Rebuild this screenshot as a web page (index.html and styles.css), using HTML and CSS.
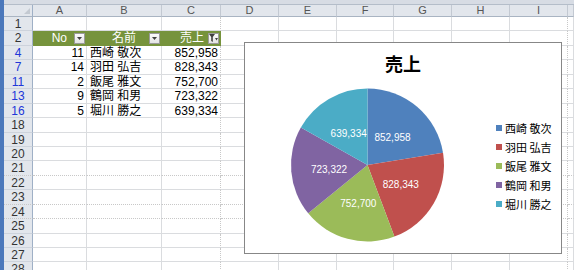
FILE: index.html
```html
<!DOCTYPE html>
<html lang="ja">
    <head>
        <meta charset="UTF-8" />
        <title>売上 - Sheet1</title>
        <link rel="stylesheet" href="styles.css" />
    </head>
    <body>
        <div class="window">
            <div class="frame-top"></div>

            <div class="sheet">
                <div class="row col-head">
                    <div class="corner">
                        <svg width="6" height="6" viewBox="0 0 6 6"><path d="M6 0v6H0z" fill="#c3c9d1" /></svg>
                    </div>
                    <div>A</div>
                    <div>B</div>
                    <div>C</div>
                    <div>D</div>
                    <div>E</div>
                    <div>F</div>
                    <div>G</div>
                    <div>H</div>
                    <div>I</div>
                    <div></div>
                </div>

                <div class="row"><div class="rh">1</div><div></div><div></div><div class="edge"></div><div></div><div></div><div></div><div></div><div></div><div class="edge"></div><div></div></div>

                <div class="row">
                    <div class="rh">2</div>
                    <div class="th">
                        <span>No</span>
                        <span class="dd"><svg width="5" height="3" viewBox="0 0 5 3"><path d="M0 0h5L2.5 3z" fill="#404040" /></svg></span>
                    </div>
                    <div class="th center">
                        <span class="th-label">名前</span>
                        <span class="dd"><svg width="5" height="3" viewBox="0 0 5 3"><path d="M0 0h5L2.5 3z" fill="#404040" /></svg></span>
                    </div>
                    <div class="th tight">
                        <span>売上</span>
                        <span class="dd">
                            <svg width="9" height="8" viewBox="0 0 9 8">
                                <path d="M0 0h6L3.8 3v5L2.2 7V3z" fill="#404040" />
                                <path d="M6 4h3L7.5 6.5z" fill="#404040" />
                            </svg>
                        </span>
                    </div>
                    <div></div><div></div><div></div><div></div><div></div><div class="edge"></div><div></div>
                </div>

                <div class="row"><div class="rh hit">4</div><div class="num">11</div><div class="name">西崎 敬次</div><div class="num edge">852,958</div><div></div><div></div><div></div><div></div><div></div><div class="edge"></div><div></div></div>
                <div class="row"><div class="rh hit">7</div><div class="num">14</div><div class="name">羽田 弘吉</div><div class="num edge">828,343</div><div></div><div></div><div></div><div></div><div></div><div class="edge"></div><div></div></div>
                <div class="row"><div class="rh hit">11</div><div class="num">2</div><div class="name">飯尾 雅文</div><div class="num edge">752,700</div><div></div><div></div><div></div><div></div><div></div><div class="edge"></div><div></div></div>
                <div class="row"><div class="rh hit">13</div><div class="num">9</div><div class="name">鶴岡 和男</div><div class="num edge">723,322</div><div></div><div></div><div></div><div></div><div></div><div class="edge"></div><div></div></div>
                <div class="row"><div class="rh hit">16</div><div class="num">5</div><div class="name">堀川 勝之</div><div class="num edge">639,334</div><div></div><div></div><div></div><div></div><div></div><div class="edge"></div><div></div></div>

                <div class="row"><div class="rh">18</div><div></div><div></div><div class="edge"></div><div></div><div></div><div></div><div></div><div></div><div class="edge"></div><div></div></div>
                <div class="row"><div class="rh">19</div><div></div><div></div><div class="edge"></div><div></div><div></div><div></div><div></div><div></div><div class="edge"></div><div></div></div>
                <div class="row"><div class="rh">20</div><div></div><div></div><div class="edge"></div><div></div><div></div><div></div><div></div><div></div><div class="edge"></div><div></div></div>
                <div class="row page-break"><div class="rh">21</div><div></div><div></div><div class="edge"></div><div></div><div></div><div></div><div></div><div></div><div class="edge"></div><div></div></div>
                <div class="row"><div class="rh">22</div><div></div><div></div><div class="edge"></div><div></div><div></div><div></div><div></div><div></div><div class="edge"></div><div></div></div>
                <div class="row page-break"><div class="rh">23</div><div></div><div></div><div class="edge"></div><div></div><div></div><div></div><div></div><div></div><div class="edge"></div><div></div></div>
                <div class="row page-break"><div class="rh">24</div><div></div><div></div><div class="edge"></div><div></div><div></div><div></div><div></div><div></div><div class="edge"></div><div></div></div>
                <div class="row"><div class="rh">25</div><div></div><div></div><div class="edge"></div><div></div><div></div><div></div><div></div><div></div><div class="edge"></div><div></div></div>
                <div class="row"><div class="rh">26</div><div></div><div></div><div class="edge"></div><div></div><div></div><div></div><div></div><div></div><div class="edge"></div><div></div></div>
                <div class="row"><div class="rh">27</div><div></div><div></div><div class="edge"></div><div></div><div></div><div></div><div></div><div></div><div class="edge"></div><div></div></div>
                <div class="row"><div class="rh">28</div><div></div><div></div><div class="edge"></div><div></div><div></div><div></div><div></div><div></div><div class="edge"></div><div></div></div>
            </div>

            <!-- embedded chart floats over the cells -->
            <div class="chart">
                <div class="chart-title">売上</div>
                <div class="chart-body">
                    <svg class="pie" width="240" height="179" viewBox="0 0 240 179">
                        <path d="M122.5 91L122.5 14.5A76.5 76.5 0 0 1 198.03 78.87Z" fill="#4f81bd" />
                        <path d="M122.5 91L198.03 78.87A76.5 76.5 0 0 1 149.39 162.62Z" fill="#c0504d" />
                        <path d="M122.5 91L149.39 162.62A76.5 76.5 0 0 1 63.23 139.37Z" fill="#9bbb59" />
                        <path d="M122.5 91L63.23 139.37A76.5 76.5 0 0 1 55.84 53.46Z" fill="#8064a2" />
                        <path d="M122.5 91L55.84 53.46A76.5 76.5 0 0 1 122.5 14.5Z" fill="#4bacc6" />
                        <g class="pie-labels">
                            <text x="147.5" y="66.5">852,958</text>
                            <text x="155.8" y="113.5">828,343</text>
                            <text x="113.3" y="132.5">752,700</text>
                            <text x="84" y="98.5">723,322</text>
                            <text x="103.7" y="62.8">639,334</text>
                        </g>
                    </svg>
                    <ul class="legend">
                        <li><span class="swatch blue"></span>西崎 敬次</li>
                        <li><span class="swatch red"></span>羽田 弘吉</li>
                        <li><span class="swatch green"></span>飯尾 雅文</li>
                        <li><span class="swatch purple"></span>鶴岡 和男</li>
                        <li><span class="swatch cyan"></span>堀川 勝之</li>
                    </ul>
                </div>
            </div>
        </div>
    </body>
</html>
```

FILE: styles.css
```css
body {
    margin: 0;
    background-color: #fff;
    font-family: "Liberation Sans", "Noto Sans CJK JP", sans-serif;
    color: #000;
}

.window {
    position: relative;
    height: 270px;
    overflow: hidden;
    border-left: 4px solid #4b78bb;
    box-sizing: border-box;
}

.frame-top {
    height: 4px;
    background-color: #d7dce4;
    border-bottom: 1px solid #b4bdc9;
}

.row {
    display: grid;
    grid-template-columns: 29px 54px 75px 59px 58px 58px 57px 58px 58px 58px 1fr;
    height: 14.45px;
}

.row > div {
    box-sizing: border-box;
    border-right: 1px solid #dadcdf;
    border-bottom: 1px solid #dadcdf;
    font-size: 12px;
    line-height: 14px;
    white-space: nowrap;
    overflow: hidden;
}

.row > .edge {
    border-right: 1px dotted #c8c8c8;
}

.row.page-break > div {
    border-bottom: 1px dotted #c8c8c8;
}

/* column letters */
.col-head {
    height: 12px;
}

.col-head > div {
    background-color: #e2e6ec;
    border-right: 1px solid #c3c9d2;
    border-bottom: 1px solid #a9b4c2;
    color: #555;
    font-size: 11px;
    line-height: 11px;
    text-align: center;
}

.col-head > .corner {
    display: flex;
    align-items: flex-end;
    justify-content: flex-end;
    padding: 0 2px 2px 0;
    border-right-color: #9fb0c6;
}

/* row numbers */
.row > .rh {
    background-color: #e2e6ec;
    border-right: 1px solid #9fb0c6;
    border-bottom: 1px solid #cdd3dc;
    color: #333;
    text-align: center;
}

.row > .rh.hit {
    color: #2036d8;
}

.row > .num {
    text-align: right;
    padding-right: 2px;
}

.row > .name {
    padding-left: 3px;
}

/* table header with filter buttons */
.row > .th {
    display: flex;
    align-items: center;
    justify-content: flex-end;
    gap: 7px;
    padding-right: 1px;
    background-color: #76933c;
    border-color: #76933c;
    color: #fff;
}

.row > .th.center {
    position: relative;
    justify-content: flex-end;
}

.th.center .th-label {
    position: absolute;
    left: 0;
    right: 0;
    text-align: center;
}

.row > .th.tight {
    gap: 4px;
}

.dd {
    display: flex;
    align-items: center;
    justify-content: center;
    width: 11px;
    height: 11px;
    box-sizing: border-box;
    background: linear-gradient(#fbfbfb, #e4e4e4);
    border: 1px solid #9a9a9a;
}

/* chart */
.chart {
    position: absolute;
    left: 240px;
    top: 42px;
    width: 318px;
    height: 212px;
    box-sizing: border-box;
    border: 1px solid #878787;
    background-color: #fff;
    display: flex;
    flex-direction: column;
}

.chart-title {
    margin-top: 9px;
    font-family: "Noto Sans CJK JP", sans-serif;
    font-size: 18px;
    font-weight: bold;
    line-height: 22px;
    text-align: center;
}

.chart-body {
    display: flex;
}

.pie {
    flex: none;
    display: block;
}

.pie-labels text {
    font-family: "Liberation Sans", sans-serif;
    font-size: 10px;
    fill: #fff;
    text-anchor: middle;
}

.legend {
    list-style: none;
    margin: 44px 0 0 11px;
    padding: 0;
}

.legend li {
    display: flex;
    align-items: center;
    gap: 3px;
    height: 19.2px;
    font-family: "Noto Sans CJK JP", sans-serif;
    font-size: 11px;
    white-space: nowrap;
}

.swatch {
    width: 6px;
    height: 6px;
}

.swatch.blue { background-color: #4f81bd; }
.swatch.red { background-color: #c0504d; }
.swatch.green { background-color: #9bbb59; }
.swatch.purple { background-color: #8064a2; }
.swatch.cyan { background-color: #4bacc6; }
```
